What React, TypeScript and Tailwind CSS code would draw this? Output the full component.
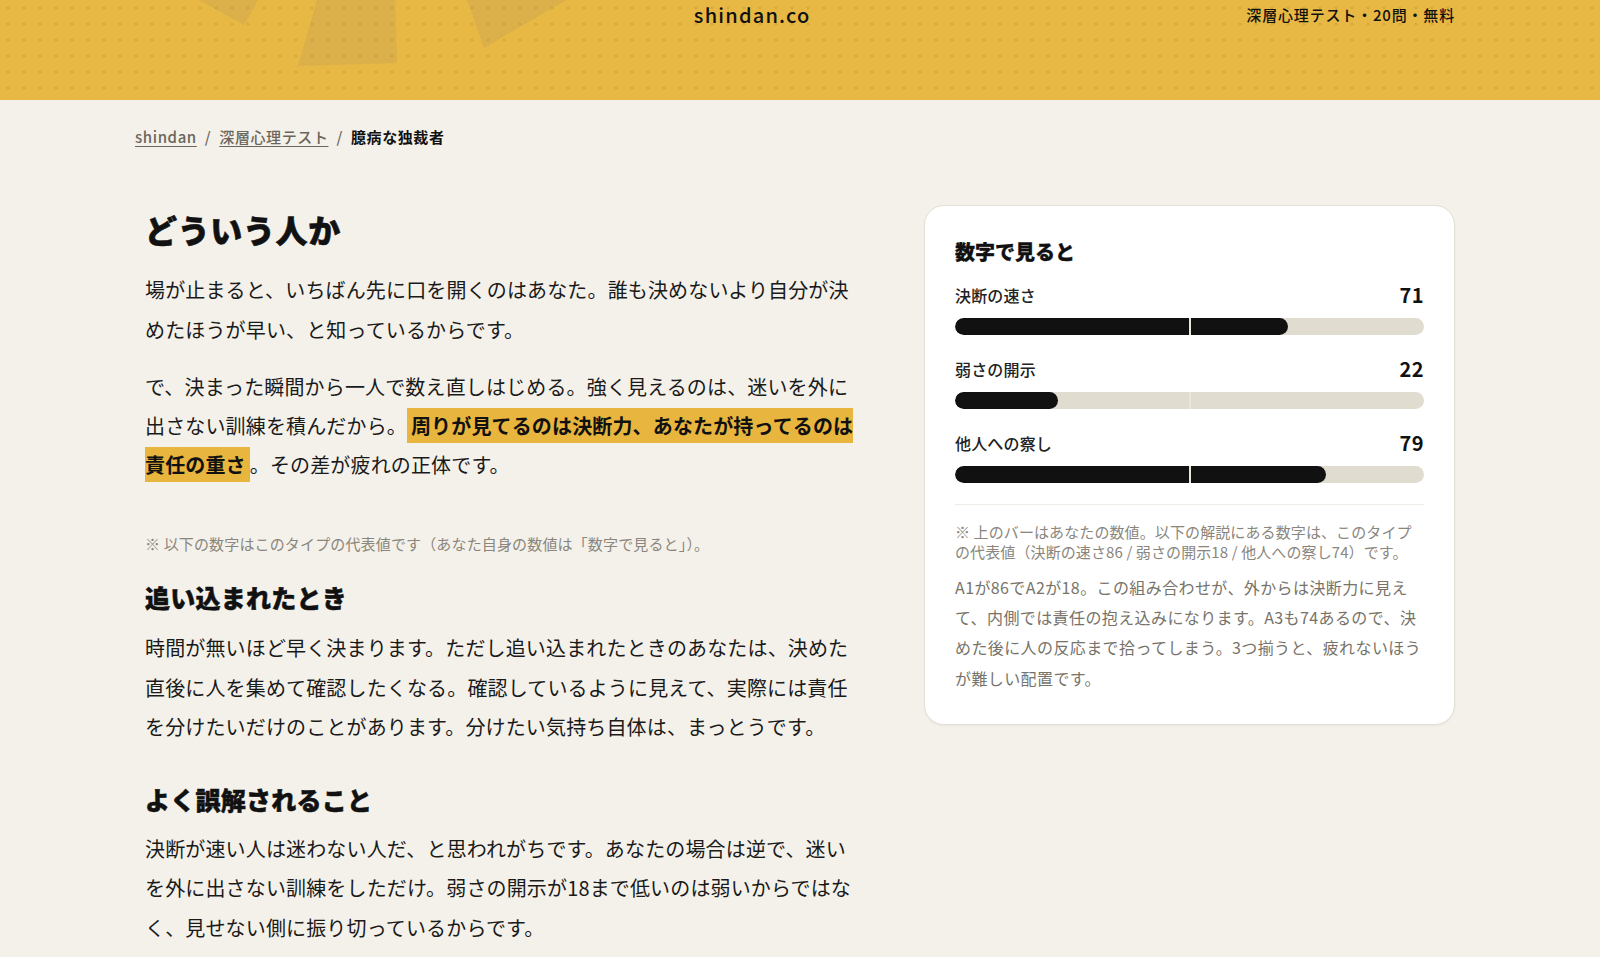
const Bar = ({ label, value, mt }: { label: string; value: number; mt: string }) => (
  <div className={mt}>
    <div className="flex items-center justify-between h-[26px]">
      <span className="text-[16px] font-medium text-[#222] tracking-[0.01em]">{label}</span>
      <span className="text-[20px] font-bold text-[#111] tracking-[0.02em]">{value}</span>
    </div>
    <div className="relative mt-[10px] h-[17px] rounded-full bg-[#e0dccf] overflow-hidden">
      <div className="h-full rounded-full bg-[#111]" style={{ width: `${value}%` }} />
      <div className="absolute left-1/2 top-0 h-full w-[2px] -translate-x-1/2 bg-[#e9e6dc]" />
    </div>
  </div>
);

export default function App() {
  return (
    <div className="relative h-[957px] overflow-hidden bg-[#f4f1ea] pr-[10px] text-[#1a1a1a] font-['Noto_Sans_CJK_JP','Noto_Sans',sans-serif]">
      <header className="relative -mr-[10px] h-[100px] overflow-hidden bg-[#e8b844]">
        <svg className="absolute inset-0" width="1600" height="100" aria-hidden="true">
          <polygon points="199,0 244,25 258,0" fill="#dbb04a" />
          <polygon points="317,0 395,0 397,63 298,66" fill="#dbb04a" />
          <polygon points="467,0 484,48 566,0" fill="#dbb04a" />
        </svg>
        <div className="absolute inset-0 bg-[radial-gradient(circle,rgba(90,60,0,0.16)_1px,transparent_1.2px)] bg-[size:16px_16px]" />
        <div className="relative ml-[135px] flex w-[1320px] items-start justify-between pt-[2px]">
          <span className="w-[123px]" />
          <span className="text-[20px] leading-[26px] font-medium tracking-[0.06em] text-[#111]">shindan.co</span>
          <span className="text-[15px] leading-[26px] font-medium tracking-[0.055em] text-[#111]">深層心理テスト・20問・無料</span>
        </div>
      </header>

      <main className="mx-auto w-[1320px]">
        <nav className="flex items-center gap-[8px] pt-[25px] text-[15px] leading-[24px] tracking-[0.04em] font-medium">
          <span className="text-[#6b665c] underline underline-offset-[3px]">shindan</span>
          <span className="text-[#6b665c]">/</span>
          <span className="text-[#6b665c] underline underline-offset-[3px]">深層心理テスト</span>
          <span className="text-[#6b665c]">/</span>
          <span className="text-[#111] font-bold">臆病な独裁者</span>
        </nav>

        <div className="flex items-start justify-between">
          <section className="w-[732px] px-[10px] pt-[57px]">
            <h1 className="text-[32px] leading-[46px] font-black tracking-[0.02em] text-[#111] [-webkit-text-stroke:0.6px_#111]">どういう人か</h1>
            <p className="mt-[18px] text-[20px] leading-[39.5px] tracking-[0.0075em]">
              場が止まると、いちばん先に口を開くのはあなた。誰も決めないより自分が決めたほうが早い、と知っているからです。
            </p>
            <p className="mt-[18px] text-[20px] leading-[39px] tracking-[0.0075em]">
              で、決まった瞬間から一人で数え直しはじめる。強く見えるのは、迷いを外に出さない訓練を積んだから。
              <mark className="bg-[#e8b53e] px-[4px] py-[3px] font-bold text-[#111]">周りが見てるのは決断力、あなたが持ってるのは責任の重さ</mark>
              。その差が疲れの正体です。
            </p>
            <p className="mt-[48px] text-[15px] leading-[24px] tracking-[0.01em] text-[#8a867d]">
              ※ 以下の数字はこのタイプの代表値です（あなた自身の数値は「数字で見ると」）。
            </p>
            <h2 className="mt-[23px] text-[25px] leading-[36px] font-black tracking-[0.01em] text-[#111] [-webkit-text-stroke:0.5px_#111]">追い込まれたとき</h2>
            <p className="mt-[13px] text-[20px] leading-[39.5px] tracking-[0.0075em]">
              時間が無いほど早く決まります。ただし追い込まれたときのあなたは、決めた直後に人を集めて確認したくなる。確認しているように見えて、実際には責任を分けたいだけのことがあります。分けたい気持ち自体は、まっとうです。
            </p>
            <h2 className="mt-[34px] text-[25px] leading-[36px] font-black tracking-[0.01em] text-[#111] [-webkit-text-stroke:0.5px_#111]">よく誤解されること</h2>
            <p className="mt-[12px] text-[20px] leading-[39.5px] tracking-[0.0075em]">
              決断が速い人は迷わない人だ、と思われがちです。あなたの場合は逆で、迷いを外に出さない訓練をしただけ。弱さの開示が18まで低いのは弱いからではなく、見せない側に振り切っているからです。
            </p>
          </section>

          <aside className="mt-[56px] h-[520px] w-[531px] rounded-[20px] border border-[#e3e0d8] bg-white px-[30px] pt-[31px] shadow-[0_1px_2px_rgba(0,0,0,0.05)]">
            <h3 className="text-[20px] leading-[29px] font-black text-[#111] [-webkit-text-stroke:0.3px_#111]">数字で見ると</h3>
            <Bar label="決断の速さ" value={71} mt="mt-[16px]" />
            <Bar label="弱さの開示" value={22} mt="mt-[21px]" />
            <Bar label="他人への察し" value={79} mt="mt-[21px]" />
            <div className="mt-[21px] border-t border-[#eeece6] pt-[17px]">
              <p className="text-[15px] leading-[20px] tracking-[0.007em] text-[#8a867d]">
                ※ 上のバーはあなたの数値。以下の解説にある数字は、このタイプ<br />の代表値（決断の速さ86 / 弱さの開示18 / 他人への察し74）です。
              </p>
              <p className="mt-[10px] text-[16px] leading-[30.2px] tracking-[0.025em] text-[#77736a]">
                A1が86でA2が18。この組み合わせが、外からは決断力に見えて、内側では責任の抱え込みになります。A3も74あるので、決めた後に人の反応まで拾ってしまう。3つ揃うと、疲れないほうが難しい配置です。
              </p>
            </div>
          </aside>
        </div>
      </main>
    </div>
  );
}
